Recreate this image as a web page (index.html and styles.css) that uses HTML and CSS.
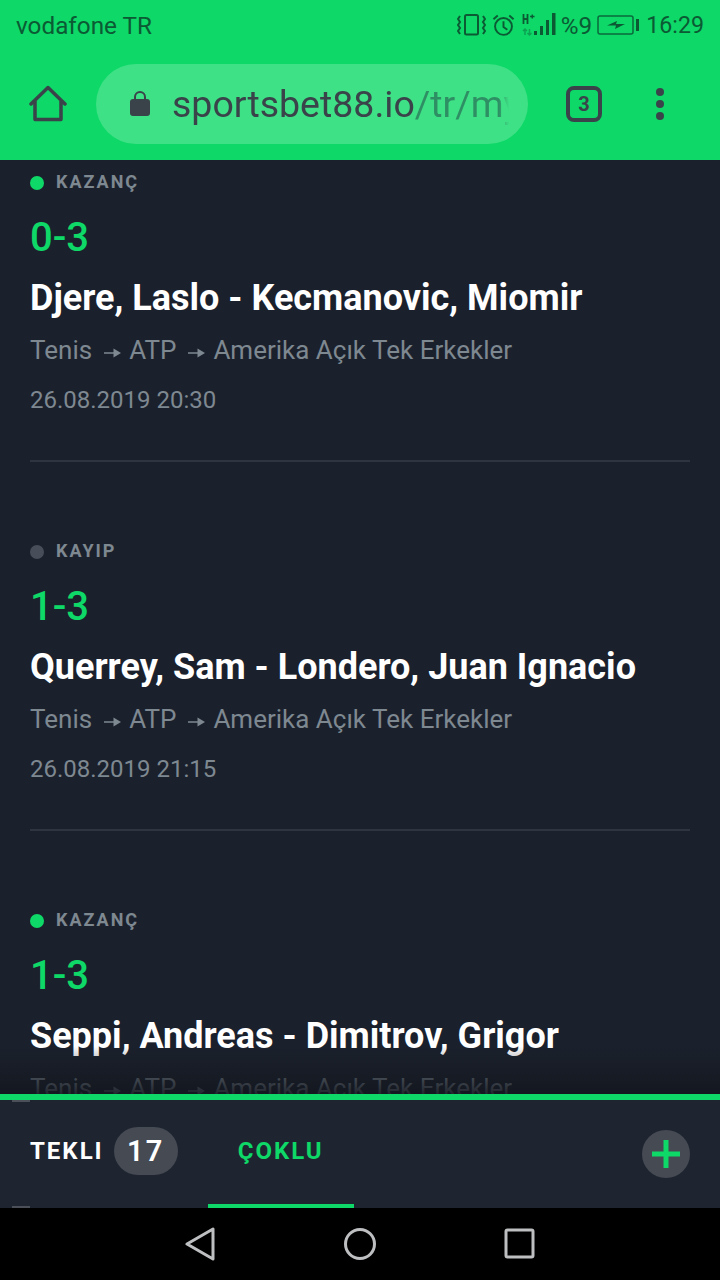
FILE: index.html
```html
<!DOCTYPE html>
<html lang="en">
<head>
    <meta charset="UTF-8">
    <meta name="viewport" content="width=device-width, initial-scale=1.0">
    <title>Sportsbet</title>
    <link rel="stylesheet" href="styles.css">
</head>
<body>
    <div class="top">
        <div class="status">
            <span class="carrier">vodafone TR</span>
            <div class="status-right">
                <svg class="ic-vibrate" width="29" height="24" viewBox="0 0 29 24"><rect x="8" y="2" width="13" height="19.500" rx="1.500" fill="none" stroke="#0b5a34" stroke-width="2"/><path d="M3 3 1 6l2 3-2 3 2 3-2 3 2 3M26 3l2 3-2 3 2 3-2 3 2 3-2 3" fill="none" stroke="#0b5a34" stroke-width="2"/></svg>
                <svg class="ic-alarm" width="23" height="24" viewBox="0 0 24 24" fill="none" stroke="#0b5a34" stroke-width="2"><circle cx="12" cy="13.500" r="8.800"/><path d="M12 8v6l4 3M1.500 6 6 2M22.500 6 18 2"/></svg>
                <svg class="ic-signal" width="36" height="24" viewBox="0 0 36 24"><path d="M1.500 1v10M5.500 1v10M1.500 6h4" stroke="#0b5a34" stroke-width="1.800" fill="none"/><path d="M8 3.500h4.500M10.250 1.500v4" stroke="#0b5a34" stroke-width="1.400"/><path d="M3 16v6M1 18l2-2 2 2M7.500 16v6M5.500 20l2 2 2-2" stroke="#0b8c4a" stroke-width="1.500" fill="none" opacity=".7"/><rect x="12" y="18" width="3" height="4" fill="#0b5a34"/><rect x="18" y="13" width="3" height="9" fill="#0b5a34"/><rect x="24" y="7" width="3" height="15" fill="#0b5a34"/><rect x="30" y="0" width="3.500" height="22" fill="#0b5a34"/></svg>
                <span class="pct">%9</span>
                <svg class="ic-battery" width="42" height="20" viewBox="0 0 42 20"><rect x="1" y="1" width="35" height="18" rx="2" fill="none" stroke="#0b6a3c" stroke-width="1.500"/><rect x="39" y="4" width="3" height="12" fill="#0b5a34"/><path d="M10 10.500 20 6l-1 3h9l-10 5 1-3.500z" fill="#0b5a34"/></svg>
                <span class="clock">16:29</span>
            </div>
        </div>
        <div class="toolbar">
            <svg class="ic-home" width="38" height="38" viewBox="0 0 38 38" fill="none" stroke="#3a424a" stroke-width="3.500" stroke-linejoin="round" stroke-linecap="round"><path d="M2 19 19 2.500 36 19M6 15.500V34.500h26V15.500"/></svg>
            <div class="urlbar">
                <svg class="ic-lock" width="20" height="28" viewBox="0 0 20 28"><path d="M5 11V7a5 5 0 0 1 10 0v4" fill="none" stroke="#3a424a" stroke-width="2"/><rect y="9" width="20" height="17" rx="3" fill="#3a424a"/></svg>
                <div class="url"><span class="host">sportsbet88.io</span><span class="path">/tr/my</span></div>
            </div>
            <div class="tabs">3</div>
            <div class="menu"><i></i><i></i><i></i></div>
        </div>
    </div>

    <div class="content">
        <div class="list">
            <div class="bet">
                <div class="result"><span class="dot"></span>KAZANÇ</div>
                <div class="score">0-3</div>
                <div class="match">Djere, Laslo - Kecmanovic, Miomir</div>
                <div class="league">Tenis<svg class="arrow" width="17" height="12" viewBox="0 0 17 12"><path d="M0 5.200h11V6.800H0z M9.500 1.500 17 6l-7.500 4.500z"/></svg>ATP<svg class="arrow" width="17" height="12" viewBox="0 0 17 12"><path d="M0 5.200h11V6.800H0z M9.500 1.500 17 6l-7.500 4.500z"/></svg>Amerika Açık Tek Erkekler</div>
                <div class="date">26.08.2019 20:30</div>
            </div>
            <div class="bet">
                <div class="result"><span class="dot lost"></span>KAYIP</div>
                <div class="score">1-3</div>
                <div class="match">Querrey, Sam - Londero, Juan Ignacio</div>
                <div class="league">Tenis<svg class="arrow" width="17" height="12" viewBox="0 0 17 12"><path d="M0 5.200h11V6.800H0z M9.500 1.500 17 6l-7.500 4.500z"/></svg>ATP<svg class="arrow" width="17" height="12" viewBox="0 0 17 12"><path d="M0 5.200h11V6.800H0z M9.500 1.500 17 6l-7.500 4.500z"/></svg>Amerika Açık Tek Erkekler</div>
                <div class="date">26.08.2019 21:15</div>
            </div>
            <div class="bet">
                <div class="result"><span class="dot"></span>KAZANÇ</div>
                <div class="score">1-3</div>
                <div class="match">Seppi, Andreas - Dimitrov, Grigor</div>
                <div class="league">Tenis<svg class="arrow" width="17" height="12" viewBox="0 0 17 12"><path d="M0 5.200h11V6.800H0z M9.500 1.500 17 6l-7.500 4.500z"/></svg>ATP<svg class="arrow" width="17" height="12" viewBox="0 0 17 12"><path d="M0 5.200h11V6.800H0z M9.500 1.500 17 6l-7.500 4.500z"/></svg>Amerika Açık Tek Erkekler</div>
            </div>
        </div>
        <div class="fade"></div>
    </div>

    <div class="slip">
        <div class="tab-single">TEKLI <span class="count">17</span></div>
        <div class="tab-multi">ÇOKLU</div>
        <div class="add"><svg width="28" height="28" viewBox="0 0 28 28"><path d="M11.500 0h5v11.500H28v5H16.500V28h-5V16.500H0v-5h11.500z" fill="#0ed867"/></svg></div>
    </div>

    <div class="navbar">
        <svg width="32" height="34" viewBox="0 0 32 34" fill="none" stroke="#bdbfc1" stroke-width="3" stroke-linejoin="round"><path d="M29 2v30L3 17z"/></svg>
        <svg width="34" height="34" viewBox="0 0 34 34" fill="none" stroke="#bdbfc1" stroke-width="3"><circle cx="17" cy="17" r="14.500"/></svg>
        <svg width="32" height="32" viewBox="0 0 32 32" fill="none" stroke="#bdbfc1" stroke-width="3" stroke-linejoin="round"><rect x="2" y="2" width="27" height="27" rx="1.500"/></svg>
    </div>
</body>
</html>
```

FILE: styles.css
```css
* {
    box-sizing: border-box;
}

body {
    font-family: Roboto, sans-serif;
    background-color: #1b212c;
    margin: 0;
    width: 720px;
    height: 1280px;
    overflow: hidden;
    display: flex;
    flex-direction: column;
}

.top {
    background-color: #0ed867;
    height: 160px;
    flex-shrink: 0;
}

.status {
    height: 50px;
    padding: 0 16px;
    display: flex;
    justify-content: space-between;
    align-items: center;
    color: #0b5a34;
    font-size: 24.3px;
}

.status-right {
    display: flex;
    align-items: center;
}

.ic-alarm {
    margin-left: 6px;
}

.ic-signal {
    margin-left: 7px;
}

.pct {
    margin-left: 3px;
}

.ic-battery {
    margin-left: 5px;
}

.clock {
    margin-left: 7px;
    font-size: 23.2px;
}

.toolbar {
    height: 110px;
    padding: 14px 16px 16px 29px;
    display: flex;
    align-items: center;
}

.ic-home {
    flex-shrink: 0;
}

.urlbar {
    margin-left: 29px;
    width: 432px;
    height: 80px;
    border-radius: 40px;
    background-color: #3fe186;
    padding-left: 34px;
    display: flex;
    align-items: center;
    gap: 22px;
    flex-shrink: 0;
}

.url {
    width: 337px;
    overflow: hidden;
    white-space: nowrap;
    font-size: 37.5px;
    color: #3a424a;
    -webkit-mask-image: linear-gradient(90deg, #000 97%, transparent);
    mask-image: linear-gradient(90deg, #000 97%, transparent);
}

.path {
    color: #2f8f64;
}

.tabs {
    margin-left: 38px;
    width: 36px;
    height: 36px;
    border: 4px solid #3a424a;
    border-radius: 8px;
    color: #3a424a;
    font-size: 20px;
    font-weight: 700;
    display: flex;
    align-items: center;
    justify-content: center;
    flex-shrink: 0;
}

.menu {
    margin-left: 54px;
    display: flex;
    flex-direction: column;
    gap: 4px;
}

.menu i {
    display: block;
    width: 8px;
    height: 8px;
    border-radius: 50%;
    background-color: #3a424a;
}

.content {
    flex: 1;
    overflow: hidden;
    position: relative;
}

.list {
    padding: 10px 30px 0;
}

.bet {
    height: 292px;
    margin-bottom: 77px;
    border-bottom: 2px solid #2f3540;
}

.bet:last-child {
    border-bottom: none;
}

.result {
    display: flex;
    align-items: center;
    height: 23px;
    color: #7e8891;
    font-size: 18px;
    font-weight: 700;
    letter-spacing: 2px;
}

.dot {
    width: 14px;
    height: 14px;
    border-radius: 50%;
    background-color: #0ed867;
    margin: 2px 12px 0 0;
}

.dot.lost {
    background-color: #484e59;
}

.score {
    margin-top: 23px;
    color: #0ed867;
    font-size: 40px;
    font-weight: 500;
    line-height: 44px;
}

.match {
    margin-top: 16px;
    color: #fff;
    font-size: 36px;
    font-weight: 700;
    line-height: 44px;
    white-space: nowrap;
}

.league {
    margin-top: 14px;
    color: #7e8891;
    font-size: 26px;
    line-height: 32px;
    white-space: nowrap;
}

.arrow {
    fill: #7e8891;
    margin: 0 8px 0 12px;
}

.date {
    margin-top: 19px;
    color: #7e8891;
    font-size: 24px;
    line-height: 30px;
}

.fade {
    position: absolute;
    left: 0;
    right: 0;
    bottom: 0;
    height: 48px;
    background: linear-gradient(rgba(18, 22, 30, 0), rgba(18, 22, 30, 0.85));
}

.slip {
    height: 114px;
    flex-shrink: 0;
    border-top: 6px solid #0ed867;
    background-color: #1f2530;
    padding: 0 30px;
    display: flex;
    align-items: center;
    position: relative;
}

.slip::before,
.slip::after {
    content: "";
    position: absolute;
    left: 12px;
    width: 18px;
    height: 2px;
    background-color: #4a4f58;
}

.slip::before {
    top: 0;
}

.slip::after {
    bottom: 0;
}

.tab-single {
    padding-bottom: 6px;
    color: #fff;
    font-size: 24px;
    font-weight: 700;
    letter-spacing: 2px;
    display: flex;
    align-items: center;
}

.count {
    margin-left: 10px;
    width: 64px;
    height: 48px;
    border-radius: 24px;
    background-color: #454a53;
    font-size: 29px;
    font-weight: 600;
    display: flex;
    align-items: center;
    justify-content: center;
}

.tab-multi {
    align-self: stretch;
    margin-left: 30px;
    width: 146px;
    border-bottom: 4px solid #0ed867;
    padding-bottom: 2px;
    color: #0ed867;
    font-size: 24px;
    font-weight: 700;
    letter-spacing: 2px;
    display: flex;
    align-items: center;
    justify-content: center;
}

.add {
    margin-left: auto;
    width: 48px;
    height: 48px;
    border-radius: 50%;
    background-color: #454a53;
    display: flex;
    align-items: center;
    justify-content: center;
}

.navbar {
    height: 72px;
    flex-shrink: 0;
    background-color: #000;
    padding: 0 184px;
    display: flex;
    align-items: center;
    justify-content: space-between;
}
```
